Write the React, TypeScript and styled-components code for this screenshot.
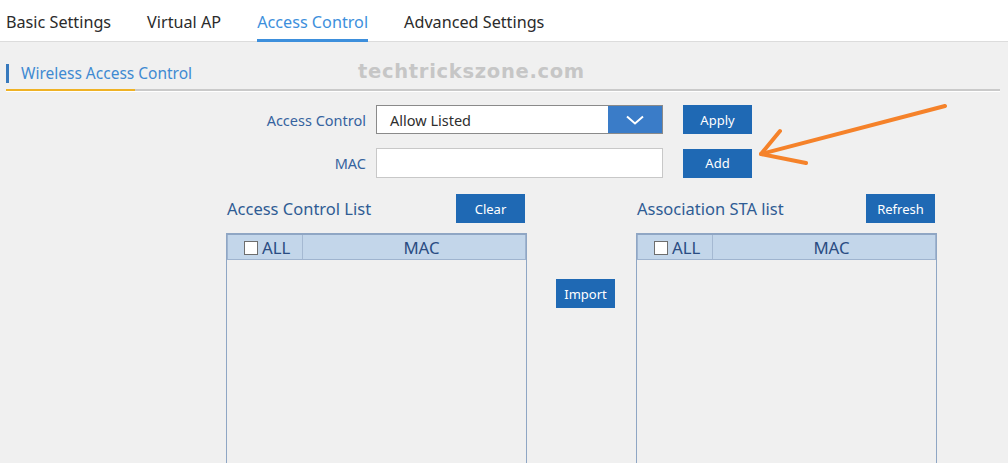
import React from 'react'
import styled, { createGlobalStyle } from 'styled-components'

const GlobalStyle = createGlobalStyle`
  html, body {
    margin: 0;
    background: #f0f0f0;
    font-family: "Noto Sans", "Open Sans", Arial, sans-serif;
    overflow: hidden;
  }
`

const Page = styled.div`
  position: relative;
  width: 1008px;
  height: 463px;
  overflow: hidden;
`

const TabBar = styled.div`
  display: flex;
  gap: 36px;
  height: 42px;
  padding-left: 6px;
  background: #fff;
  border-bottom: 1px solid #dcdcdc;
  box-sizing: border-box;
`

const Tab = styled.div<{ active?: boolean }>`
  display: flex;
  align-items: center;
  height: 42px;
  box-sizing: border-box;
  padding-top: 4px;
  font-size: 16.2px;
  color: ${({ active }) => (active ? '#3d8fdc' : '#2b2b2b')};
  border-bottom: 3px solid ${({ active }) => (active ? '#3d8fdc' : 'transparent')};
`

const SectionHeader = styled.div`
  margin: 20px 8px 0 6px;
  border-bottom: 2px solid #cacaca;
  box-shadow: 0 1px 0 #fff;
  display: flex;
`

const SectionTitle = styled.div`
  width: 129px;
  padding: 2px 0 6px;
  border-bottom: 2px solid #efb225;
  margin-bottom: -2px;
`

const TitleText = styled.div`
  border-left: 3px solid #3779bd;
  padding-left: 12px;
  font-size: 15.5px;
  line-height: 19px;
  color: #3f8ad2;
  white-space: nowrap;
`

const Watermark = styled.div`
  position: absolute;
  left: 358px;
  top: 60px;
  font-family: "DejaVu Sans", sans-serif;
  font-weight: bold;
  font-size: 19.5px;
  letter-spacing: 0.7px;
  color: #c6c6c6;
`

const Form = styled.div`
  display: flex;
  flex-direction: column;
  gap: 14px;
  margin-top: 14px;
`

const FormRow = styled.div`
  display: flex;
  align-items: center;
`

const Label = styled.div`
  width: 376px;
  padding-right: 10px;
  box-sizing: border-box;
  text-align: right;
  font-size: 14.5px;
  color: #36639f;
`

const Select = styled.div`
  display: flex;
  width: 287px;
  height: 29px;
  box-sizing: border-box;
  border: 1px solid #8a8a8a;
  background: #fff;
`

const SelectValue = styled.div`
  flex: 1;
  display: flex;
  align-items: center;
  padding-left: 13px;
  font-size: 14.5px;
  color: #2e2e2e;
`

const SelectToggle = styled.div`
  width: 54px;
  display: flex;
  align-items: center;
  justify-content: center;
  background: #3a7cc8;
`

const TextInput = styled.div`
  width: 287px;
  height: 30px;
  box-sizing: border-box;
  border: 1px solid #c8c8c8;
  background: #fff;
`

const Button = styled.div<{ width?: number }>`
  width: ${({ width }) => width || 69}px;
  height: 29px;
  display: flex;
  align-items: center;
  justify-content: center;
  background: #1f69b4;
  color: #fff;
  font-size: 13px;
  flex-shrink: 0;
`

const FormButton = styled(Button)`
  margin-left: 20px;
`

const Lists = styled.div`
  display: flex;
  margin-top: 16px;
  padding-left: 226px;
`

const ListColumn = styled.div`
  width: 301px;
  display: flex;
  flex-direction: column;
`

const ListHeader = styled.div`
  display: flex;
  align-items: center;
  justify-content: space-between;
  padding: 0 2px 0 1px;
`

const ListTitle = styled.div`
  font-size: 16.5px;
  color: #2f5c94;
`

const Table = styled.div`
  margin-top: 10px;
  height: 260px;
  border: 1px solid #8fa6c4;
  border-top-width: 2px;
`

const TableHead = styled.div`
  display: flex;
  height: 24px;
  background: #c3d6ea;
  border-bottom: 1px solid #9fb4cf;
  border-left: 1px solid #9fb4cf;
  border-right: 1px solid #9fb4cf;
`

const HeadCell = styled.div<{ grow?: boolean }>`
  display: flex;
  align-items: center;
  justify-content: ${({ grow }) => (grow ? 'center' : 'flex-start')};
  ${({ grow }) =>
    grow
      ? 'flex: 1; padding-left: 15px;'
      : 'width: 75px; padding-left: 16px; box-sizing: border-box; border-right: 1px solid #a5b9d2;'}
  font-size: 16.8px;
  color: #2a4c82;
`

const Checkbox = styled.span`
  width: 12px;
  height: 12px;
  border: 1px solid #6e6e6e;
  background: #fff;
  margin-right: 4px;
  margin-top: 2px;
`

const Middle = styled.div`
  width: 109px;
  padding: 85px 0 0 29px;
  box-sizing: border-box;
`

const Arrow = styled.svg`
  position: absolute;
  left: 740px;
  top: 95px;
`

function ListBlock({ title, action, actionWidth }: { title: string; action: string; actionWidth?: number }) {
  return (
    <ListColumn>
      <ListHeader>
        <ListTitle>{title}</ListTitle>
        <Button width={actionWidth}>{action}</Button>
      </ListHeader>
      <Table>
        <TableHead>
          <HeadCell>
            <Checkbox />
            ALL
          </HeadCell>
          <HeadCell grow>MAC</HeadCell>
        </TableHead>
      </Table>
    </ListColumn>
  )
}

export default function App() {
  return (
    <Page>
      <GlobalStyle />
      <TabBar>
        <Tab>Basic Settings</Tab>
        <Tab>Virtual AP</Tab>
        <Tab active>Access Control</Tab>
        <Tab>Advanced Settings</Tab>
      </TabBar>
      <SectionHeader>
        <SectionTitle>
          <TitleText>Wireless Access Control</TitleText>
        </SectionTitle>
      </SectionHeader>
      <Watermark>techtrickszone.com</Watermark>
      <Form>
        <FormRow>
          <Label>Access Control</Label>
          <Select>
            <SelectValue>Allow Listed</SelectValue>
            <SelectToggle>
              <svg width="18" height="10" viewBox="0 0 18 10">
                <path d="M1 1.5 L9 8.5 L17 1.5" fill="none" stroke="#fff" strokeWidth="2" />
              </svg>
            </SelectToggle>
          </Select>
          <FormButton>Apply</FormButton>
        </FormRow>
        <FormRow>
          <Label>MAC</Label>
          <TextInput />
          <FormButton>Add</FormButton>
        </FormRow>
      </Form>
      <Lists>
        <ListBlock title="Access Control List" action="Clear" />
        <Middle>
          <Button width={59}>Import</Button>
        </Middle>
        <ListBlock title="Association STA list" action="Refresh" />
      </Lists>
      <Arrow width="220" height="80" viewBox="0 0 220 80">
        <g fill="none" stroke="#f5822a" strokeWidth="4" strokeLinecap="round" strokeLinejoin="round">
          <path d="M205 11 L21 59" />
          <path d="M40 36 L21 59 L66 68" />
        </g>
      </Arrow>
    </Page>
  )
}
